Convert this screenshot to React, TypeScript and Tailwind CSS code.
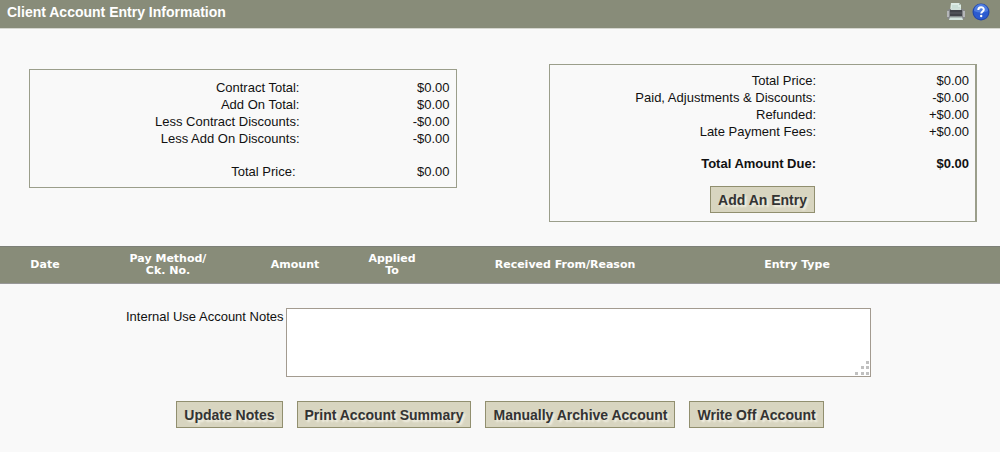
import { useState } from 'react';

interface Line {
  label: string;
  value: string;
}

const contractLines: Line[] = [
  { label: 'Contract Total:', value: '$0.00' },
  { label: 'Add On Total:', value: '$0.00' },
  { label: 'Less Contract Discounts:', value: '-$0.00' },
  { label: 'Less Add On Discounts:', value: '-$0.00' },
];

const paymentLines: Line[] = [
  { label: 'Total Price:', value: '$0.00' },
  { label: 'Paid, Adjustments & Discounts:', value: '-$0.00' },
  { label: 'Refunded:', value: '+$0.00' },
  { label: 'Late Payment Fees:', value: '+$0.00' },
];

function PrinterIcon() {
  return (
    <svg width="20" height="20" viewBox="0 0 20 20" aria-hidden="true">
      <path d="M5 1h8l2 2v6H4z" fill="#dcebe4" />
      <path d="M13 1v2h2z" fill="#a9bdb5" />
      <path d="M6 4h6M6 6h8" stroke="#b9d3c9" />
      <path d="M1 9l2-2h14l2 2v6l-1 2H2l-1-2z" fill="#85878b" />
      <path d="M5 6h10v3H5z" fill="#cfe0d9" />
      <path d="M1 9h2v6H1zM17 9h2v6h-2z" fill="#b4b6b8" />
      <path d="M4 8h12v6H4z" fill="#42444a" />
      <path d="M4 11h12" stroke="#5c5f65" />
      <path d="M4 15h12l1 3H3z" fill="#d5e5df" />
      <path d="M4 15h12" stroke="#8a9694" />
    </svg>
  );
}

function HelpIcon() {
  return (
    <svg width="18" height="18" viewBox="0 0 18 18" aria-hidden="true">
      <circle cx="9" cy="9" r="8.5" fill="#2348ac" />
      <circle cx="9" cy="9" r="7.3" fill="#2c5bd0" />
      <path d="M2 8a7 7 0 0 1 14 0q-7 3-14 0z" fill="#4f7de0" />
      <path d="M6.3 7c0-3.600 5.500-3.600 5.500-.4 0 1.900-2.600 1.900-2.600 4" fill="none" stroke="#fff" strokeWidth="2" />
      <circle cx="9.2" cy="13" r="1.2" fill="#fff" />
    </svg>
  );
}

function Button({ children, onClick }: { children: string; onClick?: () => void }) {
  return (
    <button
      type="button"
      onClick={onClick}
      className="h-[27px] px-[7px] border border-[#918f6f] bg-[#d8d5c0] text-[14px] leading-[24px] font-bold text-[#333333] text-shadow-[2px_2px_2px_#f4f2e6] whitespace-nowrap"
    >
      {children}
    </button>
  );
}

function Row({ label, value, bold = false }: Line & { bold?: boolean }) {
  return (
    <tr className={bold ? 'font-bold' : ''}>
      <th scope="row" className={`p-0 text-right ${bold ? 'font-bold' : 'font-normal'}`}>{label}</th>
      <td className="p-0 text-right">{value}</td>
    </tr>
  );
}

export default function App() {
  const [notes, setNotes] = useState('');

  return (
    <div className="min-h-screen bg-[#f9f9f9] text-[#111111] text-[13px] leading-[17px] font-['Liberation_Sans',Arial,sans-serif]">
      <header className="h-[29px] flex items-center justify-between pl-[7px] pr-2.5 pb-1 bg-[#888c79] border-b border-[#d5d6cf]">
        <h1 className="text-[14px] font-bold text-white">Client Account Entry Information</h1>
        <div className="flex items-center gap-1.5">
          <button type="button" aria-label="Print"><PrinterIcon /></button>
          <button type="button" aria-label="Help"><HelpIcon /></button>
        </div>
      </header>

      <div className="flex items-start gap-[92px] pt-[35px] pl-[29px] pr-[23px]">
        <section className="flex-1 mt-[5px] pt-[9px] pb-[7px] pr-1.5 border border-[#9b9e8b]">
          <table className="w-full table-fixed border-collapse">
            <colgroup>
              <col />
              <col className="w-[150px]" />
            </colgroup>
            <tbody>
              {contractLines.map(line => <Row key={line.label} {...line} />)}
              <tr><td colSpan={2} className="p-0 h-4"></td></tr>
              <tr>
                <th scope="row" className="p-0 pr-1 text-right font-normal">Total Price:</th>
                <td className="p-0 text-right">$0.00</td>
              </tr>
            </tbody>
          </table>
        </section>

        <section className="flex-1 pt-[7px] pb-2 pr-1.5 border border-r-2 border-[#9b9e8b]">
          <table className="w-full table-fixed border-collapse">
            <colgroup>
              <col />
              <col className="w-[153px]" />
            </colgroup>
            <tbody>
              {paymentLines.map(line => <Row key={line.label} {...line} />)}
              <tr><td colSpan={2} className="p-0 h-[15px]"></td></tr>
              <Row label="Total Amount Due:" value="$0.00" bold />
            </tbody>
          </table>
          <div className="mt-[14px] mr-[154px] flex justify-end">
            <Button>Add An Entry</Button>
          </div>
        </section>
      </div>

      <table className="mt-6 w-full table-fixed border-collapse bg-[#888c79] text-white text-[11px] leading-[12px] font-['DejaVu_Sans',Verdana,sans-serif]">
        <thead>
          <tr className="h-[37px] border-t border-b border-t-[#7d8078] border-b-[#989898]">
            <th scope="col" className="p-0 w-[9%]">Date</th>
            <th scope="col" className="p-0 pr-1 w-[16%]">Pay Method/<br />Ck. No.</th>
            <th scope="col" className="p-0 w-[9%]">Amount</th>
            <th scope="col" className="p-0 pl-1 w-[10%]">Applied<br />To</th>
            <th scope="col" className="p-0 w-[25%]">Received From/Reason</th>
            <th scope="col" className="p-0 pl-1 w-[21%]">Entry Type</th>
            <td className="p-0"></td>
          </tr>
        </thead>
      </table>

      <div className="mt-6 pl-[126px] pr-[129px] flex items-start gap-0.5">
        <label htmlFor="notes" className="whitespace-nowrap">Internal Use Account Notes</label>
        <div className="relative flex-1">
          <textarea
            id="notes"
            value={notes}
            onChange={e => setNotes(e.target.value)}
            className="block w-full h-[69px] p-1 resize-none bg-white border border-[#a39b90]"
          />
          <svg className="absolute right-0.5 bottom-0.5 pointer-events-none" width="14" height="14" viewBox="0 0 14 14" fill="#c0c0c0" aria-hidden="true">
            <path d="M11 0h3v3h-3zM6 5h3v3H6zM11 5h3v3h-3zM0 11h3v3H0zM6 11h3v3H6zM11 11h3v3h-3z" />
          </svg>
        </div>
      </div>

      <div className="mt-6 pb-6 flex justify-center gap-[14px]">
        <Button onClick={() => setNotes(notes.trim())}>Update Notes</Button>
        <Button>Print Account Summary</Button>
        <Button>Manually Archive Account</Button>
        <Button>Write Off Account</Button>
      </div>
    </div>
  );
}
